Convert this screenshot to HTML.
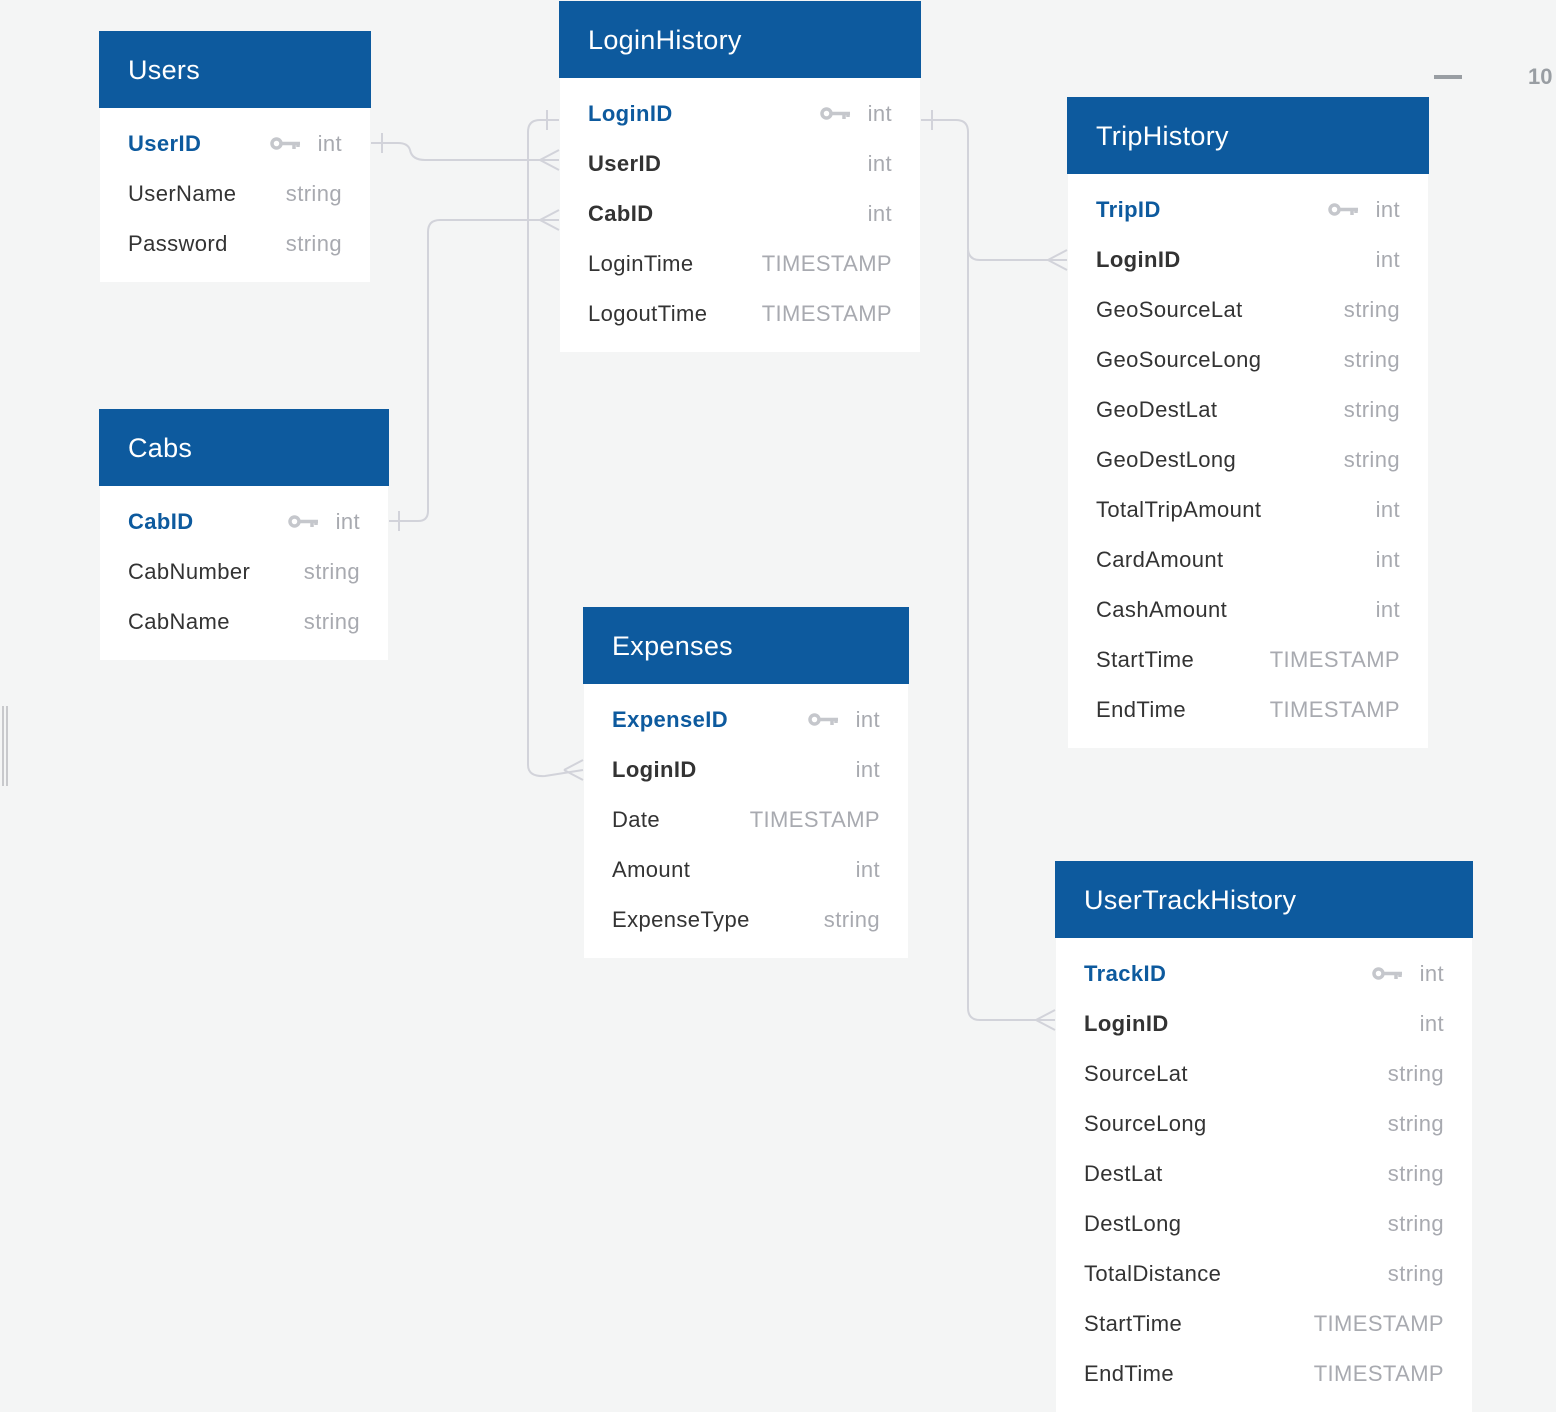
<!DOCTYPE html>
<html><head><meta charset="utf-8"><style>
body{margin:0;width:1556px;height:1408px;background:#f4f5f5;position:relative;overflow:hidden;font-family:"Liberation Sans",Helvetica,Arial,sans-serif}
.t{position:absolute;background:#fff}
.h{background:#0d5a9e;color:#fff;font-size:27px;letter-spacing:0.3px;height:77px;line-height:79px;padding-left:29px;margin:0 -1px}
.b{padding:10px 0 14px}
.r{height:50px;line-height:52px;position:relative;padding-left:28px;font-size:22px;letter-spacing:0.4px;color:#333}
.r .ty{position:absolute;right:28px;top:0;color:#a8aab0}
.pk{color:#0d5a9e;font-weight:bold}
.fk{font-weight:bold;color:#333}
.bg{position:absolute;left:0;top:0}
.k{position:absolute;top:19px;width:31px;height:13px}
</style></head><body>
<svg class="bg" width="1556" height="1408" fill="none" stroke="#d2d3da" stroke-width="2">
<path d="M371 143 H398 Q408 143 410 150 Q412 160 425 160 H559"/>
<path d="M382 133 V153"/>
<path d="M540 160 L559 150 M540 160 L559 170"/>
<path d="M559 120 H540 Q528 120 528 132 V765 Q528 777 545 776 L583 770"/>
<path d="M547 110 V130"/>
<path d="M564 770 L583 760 M564 770 L583 780"/>
<path d="M389 521 H418 Q428 521 428 511 V232 Q428 220 440 220 H559"/>
<path d="M399 511 V531"/>
<path d="M540 220 L559 210 M540 220 L559 230"/>
<path d="M921 120 H956 Q968 120 968 132 V248 Q968 260 980 260 H1067"/>
<path d="M932 110 V130"/>
<path d="M1048 260 L1067 250 M1048 260 L1067 270"/>
<path d="M968 250 V1008 Q968 1020 980 1020 H1055"/>
<path d="M1036 1020 L1055 1010 M1036 1020 L1055 1030"/>
<path d="M3 706 V786 M7 706 V786" stroke="#c8c9cc"/>
<path d="M1434 77 H1462" stroke="#999ea3" stroke-width="4"/>
</svg>
<div style="position:absolute;top:64px;left:1528px;font-size:22px;font-weight:bold;color:#999ea3">10</div>

<div class="t" style="left:100px;top:31px;width:270px"><div class="h">Users</div><div class="b">
<div class="r"><span class="pk">UserID</span><svg class="k" style="left:170px" viewBox="0 0 31 13" fill="none"><circle cx="6.5" cy="6.5" r="4.5" stroke="#c5c7cc" stroke-width="3.5"/><path d="M11 6.5H30M24 6.5V12M28 6.5V10" stroke="#c5c7cc" stroke-width="3.5"/></svg><span class="ty">int</span></div>
<div class="r">UserName<span class="ty">string</span></div>
<div class="r">Password<span class="ty">string</span></div></div></div>

<div class="t" style="left:560px;top:1px;width:360px"><div class="h">LoginHistory</div><div class="b">
<div class="r"><span class="pk">LoginID</span><svg class="k" style="left:260px" viewBox="0 0 31 13" fill="none"><circle cx="6.5" cy="6.5" r="4.5" stroke="#c5c7cc" stroke-width="3.5"/><path d="M11 6.5H30M24 6.5V12M28 6.5V10" stroke="#c5c7cc" stroke-width="3.5"/></svg><span class="ty">int</span></div>
<div class="r"><span class="fk">UserID</span><span class="ty">int</span></div>
<div class="r"><span class="fk">CabID</span><span class="ty">int</span></div>
<div class="r">LoginTime<span class="ty">TIMESTAMP</span></div>
<div class="r">LogoutTime<span class="ty">TIMESTAMP</span></div></div></div>

<div class="t" style="left:1068px;top:97px;width:360px"><div class="h">TripHistory</div><div class="b">
<div class="r"><span class="pk">TripID</span><svg class="k" style="left:260px" viewBox="0 0 31 13" fill="none"><circle cx="6.5" cy="6.5" r="4.5" stroke="#c5c7cc" stroke-width="3.5"/><path d="M11 6.5H30M24 6.5V12M28 6.5V10" stroke="#c5c7cc" stroke-width="3.5"/></svg><span class="ty">int</span></div>
<div class="r"><span class="fk">LoginID</span><span class="ty">int</span></div>
<div class="r">GeoSourceLat<span class="ty">string</span></div>
<div class="r">GeoSourceLong<span class="ty">string</span></div>
<div class="r">GeoDestLat<span class="ty">string</span></div>
<div class="r">GeoDestLong<span class="ty">string</span></div>
<div class="r">TotalTripAmount<span class="ty">int</span></div>
<div class="r">CardAmount<span class="ty">int</span></div>
<div class="r">CashAmount<span class="ty">int</span></div>
<div class="r">StartTime<span class="ty">TIMESTAMP</span></div>
<div class="r">EndTime<span class="ty">TIMESTAMP</span></div></div></div>

<div class="t" style="left:100px;top:409px;width:288px"><div class="h">Cabs</div><div class="b">
<div class="r"><span class="pk">CabID</span><svg class="k" style="left:188px" viewBox="0 0 31 13" fill="none"><circle cx="6.5" cy="6.5" r="4.5" stroke="#c5c7cc" stroke-width="3.5"/><path d="M11 6.5H30M24 6.5V12M28 6.5V10" stroke="#c5c7cc" stroke-width="3.5"/></svg><span class="ty">int</span></div>
<div class="r">CabNumber<span class="ty">string</span></div>
<div class="r">CabName<span class="ty">string</span></div></div></div>

<div class="t" style="left:584px;top:607px;width:324px"><div class="h">Expenses</div><div class="b">
<div class="r"><span class="pk">ExpenseID</span><svg class="k" style="left:224px" viewBox="0 0 31 13" fill="none"><circle cx="6.5" cy="6.5" r="4.5" stroke="#c5c7cc" stroke-width="3.5"/><path d="M11 6.5H30M24 6.5V12M28 6.5V10" stroke="#c5c7cc" stroke-width="3.5"/></svg><span class="ty">int</span></div>
<div class="r"><span class="fk">LoginID</span><span class="ty">int</span></div>
<div class="r">Date<span class="ty">TIMESTAMP</span></div>
<div class="r">Amount<span class="ty">int</span></div>
<div class="r">ExpenseType<span class="ty">string</span></div></div></div>

<div class="t" style="left:1056px;top:861px;width:416px"><div class="h">UserTrackHistory</div><div class="b">
<div class="r"><span class="pk">TrackID</span><svg class="k" style="left:316px" viewBox="0 0 31 13" fill="none"><circle cx="6.5" cy="6.5" r="4.5" stroke="#c5c7cc" stroke-width="3.5"/><path d="M11 6.5H30M24 6.5V12M28 6.5V10" stroke="#c5c7cc" stroke-width="3.5"/></svg><span class="ty">int</span></div>
<div class="r"><span class="fk">LoginID</span><span class="ty">int</span></div>
<div class="r">SourceLat<span class="ty">string</span></div>
<div class="r">SourceLong<span class="ty">string</span></div>
<div class="r">DestLat<span class="ty">string</span></div>
<div class="r">DestLong<span class="ty">string</span></div>
<div class="r">TotalDistance<span class="ty">string</span></div>
<div class="r">StartTime<span class="ty">TIMESTAMP</span></div>
<div class="r">EndTime<span class="ty">TIMESTAMP</span></div></div></div>
</body></html>
